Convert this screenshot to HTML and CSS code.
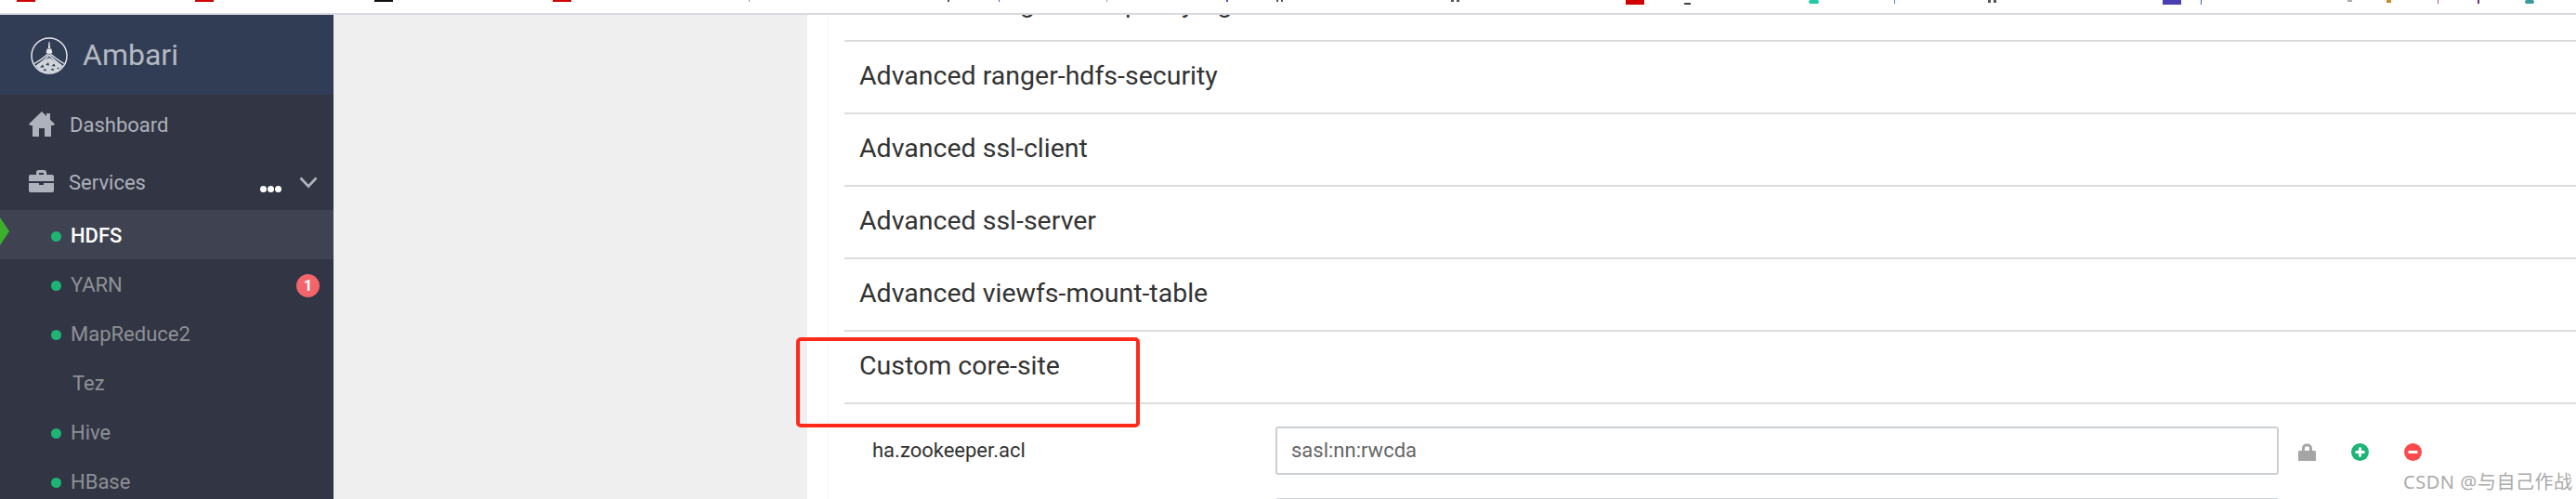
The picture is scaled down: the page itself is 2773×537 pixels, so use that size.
FILE: index.html
```html
<!DOCTYPE html>
<html lang="en">
<head>
<meta charset="utf-8">
<title>Ambari</title>
<link rel="stylesheet" href="styles.css">
</head>
<body>
<div class="page">
  <svg class="strip" width="2773" height="14" viewBox="0 0 2773 14" aria-hidden="true">
    <rect x="18" y="0" width="20" height="2" fill="#d00000"/>
    <rect x="210" y="0" width="20" height="2" fill="#d00000"/>
    <rect x="403" y="0" width="20" height="2" fill="#111"/>
    <rect x="595" y="0" width="20" height="2" fill="#d00000"/>
    <rect x="806" y="0" width="1" height="2" fill="#999"/>
    <rect x="1020" y="0" width="2" height="2" fill="#555"/>
    <rect x="1075" y="0" width="1" height="2" fill="#55a"/>
    <rect x="1191" y="0" width="1" height="2" fill="#999"/>
    <rect x="1320" y="0" width="2" height="2" fill="#55a"/>
    <rect x="1374" y="0" width="2" height="2" fill="#555"/>
    <rect x="1379" y="0" width="2" height="2" fill="#555"/>
    <rect x="1562" y="0" width="3" height="2" fill="#555"/>
    <rect x="1568" y="0" width="3" height="2" fill="#555"/>
    <rect x="1750" y="0" width="20" height="5" fill="#d00000"/>
    <rect x="1813" y="3" width="7" height="2" fill="#444"/>
    <rect x="1947" y="0" width="11" height="4" rx="2" fill="#22c8a8"/>
    <rect x="2039" y="0" width="1" height="4" fill="#3a8fd0"/>
    <rect x="2140" y="0" width="3" height="3" fill="#555"/>
    <rect x="2146" y="0" width="3" height="3" fill="#555"/>
    <rect x="2328" y="0" width="20" height="5" fill="#4a3fb0"/>
    <rect x="2369" y="0" width="1" height="5" fill="#3a5fd0"/>
    <rect x="2527" y="0" width="5" height="2" fill="#aaa"/>
    <rect x="2569" y="0" width="5" height="3" fill="#c98a30"/>
    <rect x="2624" y="0" width="1" height="4" fill="#a050a0"/>
    <rect x="2667" y="0" width="2" height="4" fill="#703090"/>
    <rect x="2718" y="0" width="10" height="4" rx="2" fill="#3a9aa0"/>
  </svg>
  <div class="shell">
    <aside class="sidebar">
      <div class="brand">
        <svg class="logo" width="42" height="42" viewBox="0 0 42 42" aria-hidden="true">
          <circle cx="21" cy="21" r="19" fill="none" stroke="#e4e6ea" stroke-width="1.5"/>
          <path d="M20.500 6h1l.6 7h-2.200z" fill="#e4e6ea"/>
          <path d="M18.600 13.500h4.800l1 4.500h-6.800z" fill="#e4e6ea"/>
          <path d="M21 17.500C17 22 11 26 5 29.500M21 17.500C25 22 31 26 37 29.500M21 20c-3 4-8 8-14 12M21 20c3 4 8 8 14 12" fill="none" stroke="#e4e6ea" stroke-width="1.300"/>
          <path d="M7 32c4-3 9-6 14-9 5 3 10 6 14 9-3 5-8 8-14 8S10 37 7 32z" fill="#cfd3da"/>
          <path d="M11 33.500l3-3 1.500 3zM17 31l3-3 1 3.500zM23.500 32l3-2.500 1 3zM14 36.500l3-1.500 1 2.500zM22 36l3-1.500 1.500 2.500zM29 34.500l2-1 .5 2z" fill="#313d54"/>
        </svg>
        <span class="brand-name">Ambari</span>
      </div>
      <nav class="menu">
        <a class="top-item">
          <svg class="top-icon" width="28" height="27" viewBox="0 0 28 27" aria-hidden="true">
            <path d="M14 0 0 13.500 1.500 15H4v12h7v-9h6v9h7V15h2.500L28 13.500l-5-4.800V2h-4v2.900z" fill="#aeb2bc"/>
          </svg>
          <span class="label">Dashboard</span>
        </a>
        <a class="top-item services">
          <svg class="top-icon" width="27" height="24" viewBox="0 0 27 24" aria-hidden="true">
            <path d="M8 5V2.500C8 1 9 0 10.500 0h6C18 0 19 1 19 2.500V5h6c1.200 0 2 .8 2 2v5H0V7c0-1.200.8-2 2-2zm3-2v2h5V3zM0 14h11v2h5v-2h11v8c0 1.200-.8 2-2 2H2c-1.200 0-2-.8-2-2z" fill="#aeb2bc"/>
          </svg>
          <span class="label">Services</span>
          <span class="more"><i></i><i></i><i></i></span>
          <svg class="chev" width="20" height="13" viewBox="0 0 20 13" aria-hidden="true">
            <path d="M1.500 1.500 10 10.500l8.500-9" fill="none" stroke="#b0b3bc" stroke-width="2.600"/>
          </svg>
        </a>
        <a class="svc active"><span class="dot"></span><span class="label">HDFS</span></a>
        <a class="svc"><span class="dot"></span><span class="label">YARN</span><span class="badge">1</span></a>
        <a class="svc"><span class="dot"></span><span class="label">MapReduce2</span></a>
        <a class="svc nodot"><span class="label">Tez</span></a>
        <a class="svc"><span class="dot"></span><span class="label">Hive</span></a>
        <a class="svc"><span class="dot"></span><span class="label">HBase</span></a>
      </nav>
    </aside>
    <div class="gutter"></div>
    <main class="panel">
      <div class="panel-inner">
        <div class="row clipped">Advanced ranger-hdfs-policymgr-ssl</div>
        <div class="row">Advanced ranger-hdfs-security</div>
        <div class="row">Advanced ssl-client</div>
        <div class="row">Advanced ssl-server</div>
        <div class="row">Advanced viewfs-mount-table</div>
        <div class="row">Custom core-site</div>
        <div class="prop">
          <label class="prop-name">ha.zookeeper.acl</label>
          <div class="prop-value">sasl:nn:rwcda</div>
          <div class="prop-actions">
            <svg width="19" height="19" viewBox="0 0 19 19" aria-hidden="true">
              <path d="M4 8V5.500C4 2.500 6.200.5 9.500.5S15 2.500 15 5.500V8h2.500c.8 0 1.500.7 1.500 1.500V19H0V9.500C0 8.700.7 8 1.500 8zm3 0h5V5.500c0-1.400-1-2.200-2.500-2.200S7 4.100 7 5.500z" fill="#a5a5a5"/>
            </svg>
            <svg class="act-plus" width="19" height="19" viewBox="0 0 19 19" aria-hidden="true">
              <circle cx="9.500" cy="9.500" r="9.500" fill="#1eb475"/>
              <path d="M8 4.500h3V8h3.500v3H11v3.500H8V11H4.500V8H8z" fill="#fff"/>
            </svg>
            <svg class="act-minus" width="19" height="19" viewBox="0 0 19 19" aria-hidden="true">
              <circle cx="9.500" cy="9.500" r="9.500" fill="#fb4a4e"/>
              <rect x="4.500" y="8" width="10" height="3" fill="#fff"/>
            </svg>
          </div>
        </div>
        <div class="prop-next"></div>
      </div>
    </main>
  </div>
  <div class="annotation"></div>
  <div class="watermark">CSDN @与自己作战</div>
</div>
</body>
</html>
```
FILE: styles.css
```css
* { box-sizing: border-box; }
html, body { margin: 0; padding: 0; }
body { font-family: Roboto, "Liberation Sans", sans-serif; background: #fff; }
.page { position: relative; width: 2773px; height: 537px; overflow: hidden; display: flex; flex-direction: column; }
.strip { display: block; flex: 0 0 14px; }
.shell { flex: 1; display: flex; min-height: 0; border-top: 2px solid #d9d9e0; }

.sidebar { flex: 0 0 359px; background: #323543; display: flex; flex-direction: column; overflow: hidden; }
.brand { flex: 0 0 86px; background: #313d54; display: flex; align-items: center; padding: 0 0 0 32px; gap: 15px; }
.logo { display: block; margin-top: 1px; }
.brand-name { font-size: 32px; color: #b4b9c2; font-weight: 400; }
.menu { display: flex; flex-direction: column; }
.label { margin-top: 2px; }
.top-item { height: 62px; display: flex; align-items: center; padding-left: 31px; font-size: 22px; color: #aeb1bc; position: relative; }
.top-icon { flex: 0 0 auto; margin-right: 16px; }
.services { padding-right: 17px; }
.more { margin-left: auto; display: flex; gap: 1px; margin-top: 17px; margin-right: 19px; }
.more i { width: 7px; height: 7px; border-radius: 50%; background: #fff; display: block; }
.chev { display: block; margin-top: 2px; }
.svc { height: 53px; display: flex; align-items: center; padding: 0 15px 0 55px; font-size: 22px; color: #8e9097; position: relative; }
.dot { width: 11px; height: 11px; border-radius: 50%; background: #1eb475; margin-right: 10px; flex: 0 0 auto; margin-top: 3px; }
.nodot { padding-left: 78px; }
.active { background: #3f4250; color: #fff; font-weight: 500; }
.active::before { content: ""; position: absolute; left: 0; top: 8px; border-left: 10px solid #3cb02a; border-top: 15px solid transparent; border-bottom: 15px solid transparent; }
.badge { margin-left: auto; width: 25px; height: 25px; border-radius: 50%; background: #f2656a; color: #fff; font-size: 16px; font-weight: 700; display: flex; align-items: center; justify-content: center; margin-top: 3px; }

.gutter { flex: 0 0 510px; background: #efefef; }
.panel { flex: 1; min-width: 0; background: #fff; padding-left: 22px; overflow: hidden; }
.panel-inner { border-left: 1px solid #f7f7f7; padding-left: 17px; }
.row { height: 78px; line-height: 73px; padding-left: 16px; font-size: 28.5px; color: #333; border-bottom: 2px solid #ddd; white-space: nowrap; }
.clipped { margin-top: -49px; }
.prop { display: flex; height: 101px; align-items: flex-start; }
.prop-name { flex: 0 0 464px; padding: 35px 0 0 30px; font-size: 22px; line-height: 30px; color: #333; }
.prop-value { flex: 0 0 1080px; height: 52px; margin-top: 24px; border: 2px solid #ccd0d4; border-radius: 3px; padding-left: 15px; font-size: 22px; line-height: 48px; color: #666; }
.prop-actions { display: flex; align-items: center; height: 19px; margin: 42px 0 0 21px; }
.act-plus { margin-left: 38px; }
.act-minus { margin-left: 38px; }
.prop-next { margin: 0 0 0 464px; width: 1080px; height: 10px; border: 2px solid #ccd0d4; border-radius: 3px; }

.annotation { position: absolute; left: 857px; top: 363px; width: 370px; height: 97px; border: 4px solid #ff2a1a; border-radius: 5px; }
.watermark { position: absolute; left: 2587px; top: 505px; font-family: "Noto Sans", "Noto Sans CJK SC", sans-serif; font-size: 20px; letter-spacing: .55px; line-height: 28px; color: #aaa; white-space: nowrap; }
```
